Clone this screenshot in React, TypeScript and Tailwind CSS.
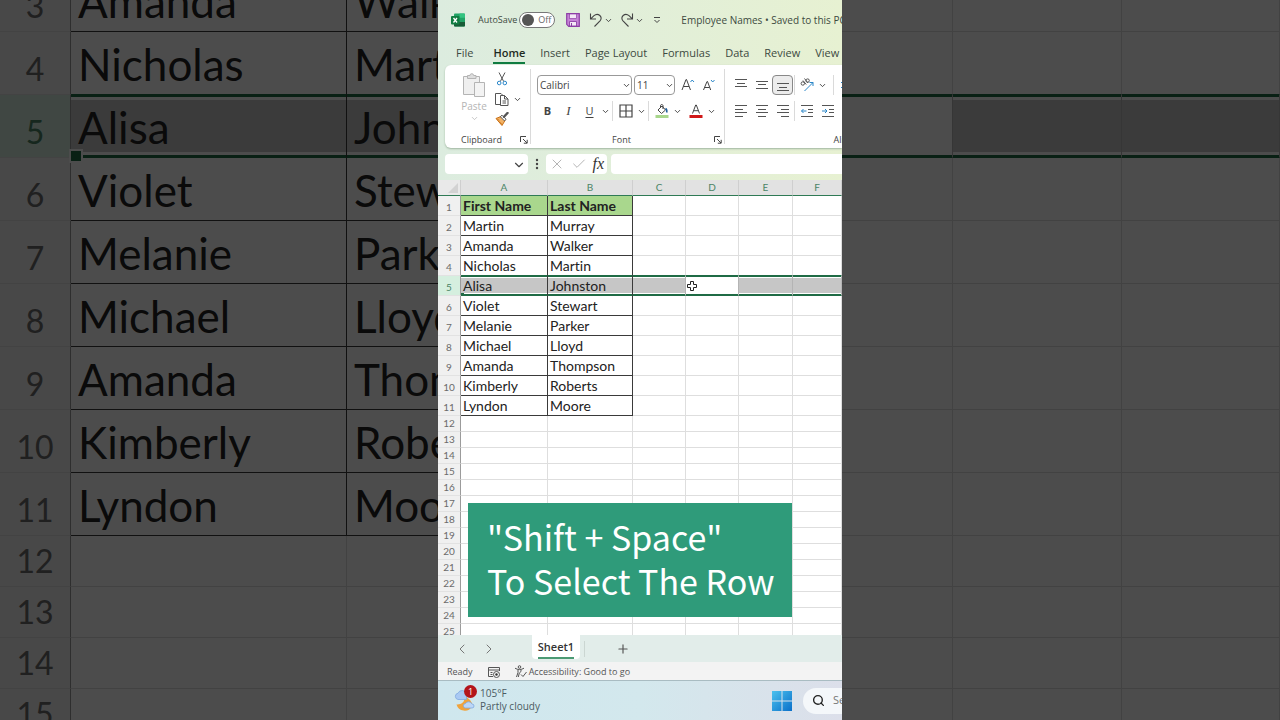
import { useState } from 'react';
import type { ReactNode } from 'react';
import { clsx } from 'clsx';
import { Check, ChevronDown, ChevronLeft, ChevronRight, Plus, Search, X } from 'lucide-react';

const people = [
  ['Martin', 'Murray'],
  ['Amanda', 'Walker'],
  ['Nicholas', 'Martin'],
  ['Alisa', 'Johnston'],
  ['Violet', 'Stewart'],
  ['Melanie', 'Parker'],
  ['Michael', 'Lloyd'],
  ['Amanda', 'Thompson'],
  ['Kimberly', 'Roberts'],
  ['Lyndon', 'Moore'],
];

const columns = ['A', 'B', 'C', 'D', 'E', 'F'];
const tabs = ['File', 'Home', 'Insert', 'Page Layout', 'Formulas', 'Data', 'Review', 'View'];
const selectedRow = 5;
const lastDataRow = people.length + 1;

function cellText(row: number, col: number) {
  if (col > 1 || row > lastDataRow) return '';
  if (row === 1) return col === 0 ? 'First Name' : 'Last Name';
  return people[row - 2][col];
}

function CellCursor() {
  return (
    <svg viewBox="0 0 12 12" className="absolute top-1 left-0 h-3 w-3">
      <path d="M4.5 1.5h3v3h3v3h-3v3h-3v-3h-3v-3h3z" fill="#fff" stroke="#222" strokeWidth="1" />
    </svg>
  );
}

function Sheet({ large = false, from, to }: { large?: boolean; from: number; to: number }) {
  const rows = Array.from({ length: to - from + 1 }, (_, i) => from + i);

  return (
    <table className="w-full table-fixed border-separate border-spacing-0 bg-white font-['Lato',sans-serif] text-[#222] [font-variant-ligatures:none]">
      <colgroup>
        <col className={large ? 'w-[71px]' : 'w-[23px]'} />
        <col className={large ? 'w-[276px]' : 'w-[87px]'} />
        <col className={large ? 'w-[269px]' : 'w-[85px]'} />
        <col className={large ? 'w-[168px]' : 'w-[53px]'} />
        <col className={large ? 'w-[169px]' : 'w-[53px]'} />
        <col className={large ? 'w-[169px]' : 'w-[54px]'} />
        <col />
      </colgroup>
      {!large && (
        <thead>
          <tr>
            <th className="h-4 border-r border-b border-r-[#cfcfcf] border-b-[#2f7a55] bg-[#e9e9e9] p-0">
              <svg viewBox="0 0 22 15" className="ml-auto h-[15px] w-[22px]">
                <path d="M20 3v10H10z" fill="#d2d2d2" />
              </svg>
            </th>
            {columns.map((c) => (
              <th
                key={c}
                className="h-4 border-r border-b border-r-[#cfcfcf] border-b-[#2f7a55] bg-[#e2e2e2] p-0 text-[10px] leading-[15px] font-normal text-[#4b8466]"
              >
                {c}
              </th>
            ))}
          </tr>
        </thead>
      )}
      <tbody>
        {rows.map((row) => {
          const isData = row <= lastDataRow;
          const isSelected = row === selectedRow;
          return (
            <tr key={row}>
              <th
                className={clsx(
                  'border-r border-b border-r-[#9b9b9b] border-b-[#e2e2e2] p-0 text-center align-bottom font-normal',
                  large ? 'text-[32px] leading-[50px]' : 'text-[10px] leading-[15px]',
                  large ? (isData ? 'h-[63px]' : 'h-[51px]') : isData ? 'h-5' : 'h-4',
                  isSelected ? 'bg-[#d5efdf] text-[#4b8466]' : 'bg-[#f0f0f0] text-[#6b6b6b]'
                )}
              >
                {row}
              </th>
              {columns.map((c, col) => {
                const inTable = isData && col < 2;
                const active = isSelected && c === 'D';
                return (
                  <td
                    key={c}
                    className={clsx(
                      'relative border-r border-b p-0 align-bottom whitespace-nowrap',
                      large ? 'pl-[7px] text-[44px] leading-[60px]' : 'pl-[2px] text-[14px] leading-[18px]',
                      inTable ? 'border-r-[#3a3a3a]' : isSelected ? 'border-r-[#b4b4b4]' : 'border-r-[#dedede]',
                      isSelected || row === selectedRow - 1
                        ? 'border-b-[#1f6b45]'
                        : inTable
                          ? 'border-b-[#3a3a3a]'
                          : 'border-b-[#dedede]',
                      isSelected &&
                        (large
                          ? 'shadow-[inset_0_2px_#1f6b45,inset_0_-2px_#1f6b45,inset_0_5px_#fff,inset_0_-5px_#fff]'
                          : 'shadow-[inset_0_1px_#1f6b45,inset_0_-1px_#1f6b45,inset_0_2px_#fff,inset_0_-2px_#fff]'),
                      isSelected && !active && 'bg-[#c6c6c6]',
                      row === 1 && inTable && 'bg-[#a9d78d] font-bold'
                    )}
                  >
                    {cellText(row, col)}
                    {isSelected && col === 0 && (
                      <span
                        className={clsx(
                          'absolute left-0 bg-[#1f6b45]',
                          large ? '-bottom-1 h-[10px] w-[10px] ring-2 ring-white' : '-bottom-px h-[3px] w-[3px]'
                        )}
                      />
                    )}
                    {active && !large && <CellCursor />}
                  </td>
                );
              })}
            </tr>
          );
        })}
      </tbody>
    </table>
  );
}

function IconButton({ label, className, children }: { label: string; className?: string; children: ReactNode }) {
  return (
    <button
      aria-label={label}
      className={clsx('flex h-5 w-[21px] shrink-0 items-center justify-center', className)}
    >
      {children}
    </button>
  );
}

function Caret({ label }: { label: string }) {
  return (
    <button aria-label={label} className="flex h-5 w-[10px] shrink-0 items-center justify-center">
      <ChevronDown className="h-[9px] w-[9px] text-[#444]" strokeWidth={2.5} />
    </button>
  );
}

function Divider({ className }: { className?: string }) {
  return <span className={clsx('h-5 w-px shrink-0 bg-[#dadada]', className)} />;
}

// Draws text lines; each entry is [x1, x2, y]
function Lines({ lines, arrow }: { lines: number[][]; arrow?: string }) {
  return (
    <svg viewBox="0 0 14 14" className="h-[14px] w-[14px]" fill="none" stroke="#555">
      {lines.map(([x1, x2, y]) => (
        <path key={y} d={`M${x1} ${y}H${x2}`} />
      ))}
      {arrow && <path d={arrow} stroke="#2a86c8" />}
    </svg>
  );
}

function Launcher({ label }: { label: string }) {
  return (
    <button aria-label={label} className="absolute right-[2px] bottom-1">
      <svg viewBox="0 0 8 8" className="h-2 w-2" fill="none" stroke="#444">
        <path d="M.5 6V.5H6M3 3l4 4M7.2 3.8v3.4H3.8" />
      </svg>
    </button>
  );
}

function TitleBar() {
  const [autoSave, setAutoSave] = useState(false);

  return (
    <header className="flex h-10 shrink-0 items-center text-[10px] whitespace-nowrap text-[#3d4a41]">
      <svg viewBox="0 0 14 14" className="ml-[13px] h-[14px] w-[14px] shrink-0">
        <rect x="3" y="0.5" width="11" height="13" rx="1" fill="#21a366" />
        <path d="M8.5.5H13a1 1 0 0 1 1 1v3.2H8.5z" fill="#33c481" />
        <path d="M3 9h11v3.5a1 1 0 0 1-1 1H4a1 1 0 0 1-1-1z" fill="#185c37" />
        <rect x="0" y="3" width="8.5" height="8.5" rx="1" fill="#107c41" />
        <path d="M2.5 5l3.500 4.500M6 5L2.500 9.500" stroke="#fff" strokeWidth="1.3" />
      </svg>
      <label className="ml-[13px] flex items-center gap-[2px] text-[9px]">
        AutoSave
        <input
          type="checkbox"
          className="sr-only"
          checked={autoSave}
          onChange={(e) => setAutoSave(e.target.checked)}
        />
        <span className="flex h-4 w-9 items-center gap-1 rounded-full border border-[#777] bg-white pl-[2px] text-[#666]">
          <span className="h-3 w-3 rounded-full bg-[#555]" />
          {autoSave ? 'On' : 'Off'}
        </span>
      </label>
      <button aria-label="Save" className="ml-[11px] shrink-0">
        <svg viewBox="0 0 14 14" className="h-[14px] w-[14px]">
          <path d="M.7.7h12.6v12.6H2.700l-2-2z" fill="#c583d6" stroke="#8d3fa6" strokeWidth="1.2" />
          <rect x="3.5" y="1" width="7" height="4.5" fill="#f4e8f7" stroke="#8d3fa6" strokeWidth=".7" />
          <path d="M3.5 13V8.500h7V13z" fill="#f4e8f7" stroke="#8d3fa6" strokeWidth=".9" />
          <path d="M5.5 10v3" stroke="#8d3fa6" />
        </svg>
      </button>
      <button aria-label="Undo" className="ml-[9px] shrink-0">
        <svg viewBox="0 0 14 14" className="h-[14px] w-[14px]" fill="none" stroke="#444" strokeWidth="1.1">
          <path d="M1.500 .5v5.500h5.500M1.700 5.800L5 2.700C9-.8 14.500 4 11 7.800L5.500 13.500" />
        </svg>
      </button>
      <Caret label="Undo history" />
      <button aria-label="Redo" className="ml-[7px] shrink-0">
        <svg viewBox="0 0 14 14" className="h-[14px] w-[14px]" fill="none" stroke="#444" strokeWidth="1.1">
          <path d="M12.500 .5v5.500H7M12.300 5.800L9 2.700C5-.8 -.5 4 3 7.800L8.500 13.500" />
        </svg>
      </button>
      <Caret label="Redo history" />
      <button aria-label="Customize Quick Access Toolbar" className="ml-[9px] shrink-0">
        <svg viewBox="0 0 8 8" className="h-2 w-2" fill="none" stroke="#444">
          <path d="M1 1.500h6M1.500 4L4 6.500 6.500 4" />
        </svg>
      </button>
      <h1 className="ml-5">Employee Names • Saved to this PC</h1>
    </header>
  );
}

function TabBar() {
  return (
    <nav className="flex h-[25px] shrink-0 items-center gap-[15px] pl-[18px] text-[11px] leading-[18px] whitespace-nowrap text-[#3d4a41]">
      {tabs.map((tab) => (
        <a
          key={tab}
          href="#"
          className={clsx(
            'border-y-2 border-t-transparent',
            tab === 'Home' ? 'ml-[5px] border-b-[#107c41] font-semibold text-[#1d2a22]' : 'border-b-transparent'
          )}
        >
          {tab}
        </a>
      ))}
    </nav>
  );
}

function Ribbon() {
  const [font, setFont] = useState('Calibri');
  const [size, setSize] = useState('11');

  return (
    <section className="ml-[7px] flex h-[83px] shrink-0 overflow-hidden rounded-l-md bg-white text-[9px] text-[#444] shadow-[0_1px_2px_#9fb5a0]">
      {/* Clipboard */}
      <div className="relative w-[85px] shrink-0">
        <div className="flex gap-2 pt-1 pl-4">
          <button className="flex w-[26px] flex-col items-center pt-[3px] text-[10px] leading-4 text-[#b5b5b5]">
            <svg viewBox="0 0 24 26" className="h-[26px] w-6" fill="#efefef" stroke="#b4b4b4">
              <path d="M1.500 4.500h16v18h-16z" />
              <path d="M5.500 6.500v-3h2.500a1.800 1.800 0 0 1 3.600 0h2.400v3z" fill="#ddd" />
              <path d="M12.500 10.500h10v14h-10z" fill="#f3f3f3" />
            </svg>
            Paste
            <ChevronDown className="h-[9px] w-[9px]" strokeWidth={2} />
          </button>
          <div className="flex flex-col">
            <IconButton label="Cut" className="-ml-1">
              <svg viewBox="0 0 12 14" className="h-[14px] w-3" fill="none" stroke="#555">
                <path d="M3 .5l4.700 9M9 .5L4.300 9.500" />
                <circle cx="3.2" cy="11" r="1.8" stroke="#2a86c8" />
                <circle cx="8.800" cy="11" r="1.8" stroke="#2a86c8" />
              </svg>
            </IconButton>
            <div className="-ml-1 flex">
              <IconButton label="Copy">
                <svg viewBox="0 0 14 14" className="h-[14px] w-[14px]" fill="none" stroke="#555">
                  <path d="M5 12.500H.5V1.500H6l1.500 1.500" />
                  <path d="M5.500 3.500h4l3.500 3.500v6.500H5.500z" fill="#fff" />
                  <path d="M9.500 3.500V7H13M7.500 9h3.500M7.500 11h3.500" />
                </svg>
              </IconButton>
              <Caret label="Copy options" />
            </div>
            <IconButton label="Format Painter" className="-ml-1">
              <svg viewBox="0 0 14 14" className="h-[14px] w-[14px]">
                <path d="M1 6.500l5-2 4 4-3 5z" fill="#f2b265" stroke="#c96f13" />
                <path d="M5.300 4.700l1.700-1.500 4 4-1.500 1.700z" fill="#fff" stroke="#555" />
                <path d="M9 4.800L12.500 1" stroke="#555" strokeWidth="2.4" strokeLinecap="round" />
                <path d="M2.500 7l1.500 1.500M4 9.500l3 3" stroke="#c96f13" />
              </svg>
            </IconButton>
          </div>
        </div>
        <p className="absolute inset-x-0 bottom-[2px] pr-3 text-center leading-3">Clipboard</p>
        <Launcher label="Clipboard settings" />
      </div>
      <Divider className="my-1 h-auto self-stretch" />

      {/* Font */}
      <div className="relative w-[193px] shrink-0 pt-[10px] pl-[6px]">
        <div className="flex items-center">
          <div className="relative">
            <select
              aria-label="Font"
              value={font}
              onChange={(e) => setFont(e.target.value)}
              className="block h-5 w-[95px] appearance-none rounded border border-[#999] bg-white pl-[2px] text-[10px]"
            >
              <option>Calibri</option>
            </select>
            <ChevronDown className="pointer-events-none absolute top-[6px] right-[1px] h-[9px] w-[9px]" strokeWidth={2.5} />
          </div>
          <div className="relative mx-[2px]">
            <select
              aria-label="Font size"
              value={size}
              onChange={(e) => setSize(e.target.value)}
              className="block h-5 w-[41px] appearance-none rounded border border-[#999] bg-white pl-[2px] text-[10px]"
            >
              <option>11</option>
            </select>
            <ChevronDown className="pointer-events-none absolute top-[6px] right-[1px] h-[9px] w-[9px]" strokeWidth={2.5} />
          </div>
          <IconButton label="Increase Font Size">
            <svg viewBox="0 0 14 14" className="h-[14px] w-[14px]" fill="none" stroke="#444">
              <path d="M1 12L5 1.500h.5L9.500 12M2.500 8.500H8" />
              <path d="M9.500 4l1.700-2L13 4" stroke="#2a86c8" />
            </svg>
          </IconButton>
          <IconButton label="Decrease Font Size">
            <svg viewBox="0 0 14 14" className="h-[14px] w-[14px]" fill="none" stroke="#444">
              <path d="M1.500 12L5 3.500h.5L8.700 12M3 9.500h4.500" />
              <path d="M9 2l1.700 2L12.500 2" stroke="#2a86c8" />
            </svg>
          </IconButton>
        </div>
        <div className="mt-[6px] flex items-center">
          <IconButton label="Bold" className="text-[11px] font-bold">B</IconButton>
          <IconButton label="Italic" className="font-['Liberation_Serif',serif] text-[13px] italic">I</IconButton>
          <IconButton label="Underline" className="text-[11px] underline underline-offset-2">U</IconButton>
          <Caret label="Underline style" />
          <Divider className="mx-[2px]" />
          <IconButton label="Borders">
            <svg viewBox="0 0 14 14" className="h-[14px] w-[14px]" fill="none" stroke="#444" strokeWidth="1.2">
              <path d="M1 1h12v12H1zM7 1v12M1 7h12" />
            </svg>
          </IconButton>
          <Caret label="Border style" />
          <Divider className="mx-[2px]" />
          <IconButton label="Fill Color">
            <svg viewBox="0 0 14 14" className="h-[14px] w-[14px]" fill="none" stroke="#444">
              <path d="M3 6l4-4 3.500 4L6.500 9.500zM5.500 3.500V1.500a1.300 1.300 0 0 1 2.500 0V5" />
              <path d="M10.500 4.500c1.500 1 1.500 2.500 1.200 4" stroke="#1f5f9e" strokeWidth="1.6" />
              <path d="M.5 12.500h13" stroke="#a9d78d" strokeWidth="3" />
            </svg>
          </IconButton>
          <Caret label="Fill color options" />
          <Divider className="mx-px bg-transparent" />
          <IconButton label="Font Color">
            <svg viewBox="0 0 14 14" className="h-[14px] w-[14px]" fill="none" stroke="#444">
              <path d="M3.500 9.500L6.700 1h.6L10.500 9.500M4.700 6.700h4.600" />
              <path d="M.5 12.500h13" stroke="#d01818" strokeWidth="3" />
            </svg>
          </IconButton>
          <Caret label="Font color options" />
        </div>
        <p className="absolute inset-x-0 bottom-[2px] pr-3 text-center leading-3">Font</p>
        <Launcher label="Font settings" />
      </div>
      <Divider className="my-1 h-auto self-stretch" />

      {/* Alignment */}
      <div className="relative w-[260px] shrink-0 pt-[10px] pl-[5px]">
        <div className="flex items-center">
          <IconButton label="Top Align">
            <Lines lines={[[1, 13, 1.5], [3, 11, 5.5], [1, 13, 8.5]]} />
          </IconButton>
          <IconButton label="Middle Align">
            <Lines lines={[[1, 13, 3.5], [3, 11, 6.5], [1, 13, 10.5]]} />
          </IconButton>
          <IconButton label="Bottom Align" className="rounded border border-[#888] bg-[#ececec]">
            <Lines lines={[[1, 13, 5.5], [3, 11, 9.5], [1, 13, 12.5]]} />
          </IconButton>
          <Divider className="mx-px" />
          <IconButton label="Orientation">
            <svg viewBox="0 0 14 14" className="h-[14px] w-[14px]" fill="none" stroke="#555">
              <circle cx="2.800" cy="5.500" r="1.700" />
              <path d="M3 2.500l3.200 4M4.500 .5l3.500 4.500" />
              <circle cx="7.600" cy="2.600" r="1.700" />
              <path d="M4.500 13L13 4.500M9.500 4.500H13V8" stroke="#2a86c8" />
            </svg>
          </IconButton>
          <Caret label="Orientation options" />
          <Divider className="ml-[6px] mr-[6px]" />
          <svg viewBox="0 0 14 14" className="h-[14px] w-[14px]" fill="none" stroke="#2a86c8">
            <path d="M1 4l3 3-3 3" />
          </svg>
        </div>
        <div className="mt-[6px] flex items-center">
          <IconButton label="Align Left">
            <Lines lines={[[1, 13, 1.5], [1, 9, 5.5], [1, 13, 8.5], [1, 9, 12.5]]} />
          </IconButton>
          <IconButton label="Center">
            <Lines lines={[[1, 13, 1.5], [3, 11, 5.5], [1, 13, 8.5], [3, 11, 12.5]]} />
          </IconButton>
          <IconButton label="Align Right">
            <Lines lines={[[1, 13, 1.5], [5, 13, 5.5], [1, 13, 8.5], [5, 13, 12.5]]} />
          </IconButton>
          <Divider className="mx-px" />
          <IconButton label="Decrease Indent">
            <Lines lines={[[1, 13, 1.5], [8, 13, 5.5], [8, 13, 8.5], [1, 13, 12.5]]} arrow="M6.500 7h-5M3.500 5l-2 2 2 2" />
          </IconButton>
          <IconButton label="Increase Indent">
            <Lines lines={[[1, 13, 1.5], [8, 13, 5.5], [8, 13, 8.5], [1, 13, 12.5]]} arrow="M1 7h5M4 5l2 2-2 2" />
          </IconButton>
        </div>
        <p className="absolute inset-x-0 bottom-[2px] text-center leading-3">Alignment</p>
      </div>
    </section>
  );
}

function FormulaBar() {
  return (
    <section className="my-[6px] ml-[7px] flex h-5 shrink-0 items-center">
      <div className="relative">
        <input aria-label="Name Box" className="block h-5 w-[83px] rounded bg-white px-1 text-[10px]" />
        <ChevronDown className="pointer-events-none absolute top-1 right-[2px] h-[14px] w-[14px] text-[#444]" strokeWidth={2} />
      </div>
      <svg viewBox="0 0 4 12" className="mx-[7px] h-3 w-1" fill="#444">
        <circle cx="2" cy="2" r="1.200" />
        <circle cx="2" cy="6" r="1.200" />
        <circle cx="2" cy="10" r="1.200" />
      </svg>
      <div className="flex h-5 w-[61px] items-center justify-around rounded bg-white">
        <button aria-label="Cancel">
          <X className="h-4 w-4 text-[#b5b5b5]" strokeWidth={1.5} />
        </button>
        <button aria-label="Enter">
          <Check className="h-4 w-4 text-[#b5b5b5]" strokeWidth={1.5} />
        </button>
        <button
          aria-label="Insert Function"
          className="font-['Liberation_Serif',serif] text-[16px] leading-4 text-[#333] italic"
        >
          fx
        </button>
      </div>
      <input aria-label="Formula Bar" className="ml-1 h-5 min-w-0 flex-1 rounded-l bg-white px-1 text-[10px]" />
    </section>
  );
}

function SheetTabs() {
  return (
    <section className="flex h-[27px] shrink-0 items-center bg-[#e2edea] text-[#777]">
      <button aria-label="Previous sheet" className="ml-4">
        <ChevronLeft className="h-4 w-4" strokeWidth={1.5} />
      </button>
      <button aria-label="Next sheet" className="ml-[11px]">
        <ChevronRight className="h-4 w-4" strokeWidth={1.5} />
      </button>
      <button className="ml-[35px] flex h-6 w-12 items-start justify-center self-start rounded-b bg-white text-[11px] leading-5 font-semibold text-[#333]">
        <span className="border-b-2 border-[#4b9a74] pt-[2px]">Sheet1</span>
      </button>
      <span className="ml-1 h-4 w-px bg-[#cbd6d2]" />
      <button aria-label="New sheet" className="ml-[31px]">
        <Plus className="h-[14px] w-[14px] text-[#555]" strokeWidth={2} />
      </button>
    </section>
  );
}

function StatusBar() {
  return (
    <section className="flex h-[19px] shrink-0 items-center border-b border-[#a9bcc2] bg-[#f3f3f3] pt-px pl-[9px] text-[9px] whitespace-nowrap text-[#555]">
      Ready
      <svg viewBox="0 0 12 12" className="ml-[15px] h-3 w-3" fill="none" stroke="#555">
        <path d="M5 10.500H.5v-9h11V5M.5 4h11M2.500 6.500h2M2.500 8.500h2" />
        <circle cx="8.500" cy="8.500" r="3" />
        <circle cx="8.500" cy="8.500" r="1.200" fill="#333" stroke="none" />
      </svg>
      <svg viewBox="0 0 13 13" className="mr-[2px] ml-[14px] h-[13px] w-[13px]" fill="none" stroke="#555">
        <circle cx="5.500" cy="2" r="1.300" />
        <path d="M1 3.200c3 1.800 6 1.800 9 0M4 4.500v3L2.500 12M7 4.500v2L5.300 8l-1 4M7 9.500l2 2 3.500-4.500" />
      </svg>
      Accessibility: Good to go
    </section>
  );
}

function Taskbar() {
  return (
    <footer className="flex h-[39px] shrink-0 items-center bg-linear-to-r from-[#cfe7ee] via-[#d3e8ed] to-[#dcdfea]">
      <button className="flex h-full items-center pb-[2px] pl-[16px] text-left text-[10px] leading-[13px] whitespace-nowrap text-[#4b5b63]">
        <span className="relative mr-[5px]">
          <svg viewBox="0 0 21 22" className="h-[22px] w-[21px]">
            <path d="M10 8C11.500 12 8 16 2.500 15.500A8.500 8.500 0 0 0 18 17.500 8.500 8.500 0 0 0 10 8z" fill="#f0a33c" />
            <path d="M4 10.500a3.200 3.200 0 0 1 0-6.300 4.500 4.500 0 0 1 8.500.8v5.500z" fill="#a9c9f3" stroke="#7fa8e0" strokeWidth=".8" />
            <path d="M11 19a2.300 2.300 0 0 1 .5-4.500 3.700 3.700 0 0 1 6.500.5 2 2 0 0 1 0 4z" fill="#bcd6f7" stroke="#7fa8e0" strokeWidth=".8" />
          </svg>
          <span className="absolute -top-1 left-[10px] flex h-[13px] w-[13px] items-center justify-center rounded-full bg-[#b3151b] text-[9px] text-white">
            1
          </span>
        </span>
        <span>
          105°F
          <br />
          Partly cloudy
        </span>
      </button>
      <button aria-label="Start" className="ml-auto">
        <svg viewBox="0 0 20 20" className="h-5 w-5">
          <defs>
            <linearGradient id="win" x1="0" y1="0" x2="1" y2="1" gradientUnits="objectBoundingBox">
              <stop offset="0" stopColor="#4cc2ee" />
              <stop offset="1" stopColor="#0a6fc9" />
            </linearGradient>
          </defs>
          <path d="M0 0h9.500v9.500H0zM10.500 0H20v9.500h-9.500zM0 10.500h9.500V20H0zM10.500 10.500H20V20h-9.500z" fill="url(#win)" />
        </svg>
      </button>
      <label className="ml-[11px] flex h-[26px] w-[39px] items-center gap-2 overflow-hidden rounded-l-full bg-[#f4f7fa] pl-[9px]">
        <Search className="h-[13px] w-[13px] shrink-0 text-[#222]" strokeWidth={2.5} />
        <input
          aria-label="Search"
          placeholder="Search"
          className="w-20 shrink-0 bg-transparent text-[11px] placeholder:text-[#777]"
        />
      </label>
    </footer>
  );
}

export default function App() {
  return (
    <div className="relative grid h-screen grid-cols-[1fr_404px_1fr] overflow-hidden bg-[#4c4c4c] font-['Open_Sans',sans-serif]">
      {/* Enlarged, dimmed sheet behind the clip */}
      <div aria-hidden="true" className="absolute inset-0 overflow-hidden">
        <div className="-mt-[31px]">
          <Sheet large from={3} to={15} />
        </div>
        <div className="absolute inset-0 bg-black/70" />
      </div>

      <main className="relative col-start-2 flex h-screen flex-col overflow-hidden bg-linear-to-r from-[#dcecdf] to-[#e7f1d2]">
        <TitleBar />
        <TabBar />
        <Ribbon />
        <FormulaBar />
        <div className="relative min-h-0 flex-1 overflow-hidden bg-white">
          <Sheet from={1} to={25} />
          <p className="absolute right-[50px] bottom-[18px] left-[30px] bg-[#2f9b7a] pt-3 pb-[14px] pl-[19px] font-['Noto_Sans_CJK_SC',sans-serif] text-[34px] leading-[44px] whitespace-nowrap text-white">
            "Shift + Space"
            <br />
            To Select The Row
          </p>
        </div>
        <SheetTabs />
        <StatusBar />
        <Taskbar />
      </main>
    </div>
  );
}
